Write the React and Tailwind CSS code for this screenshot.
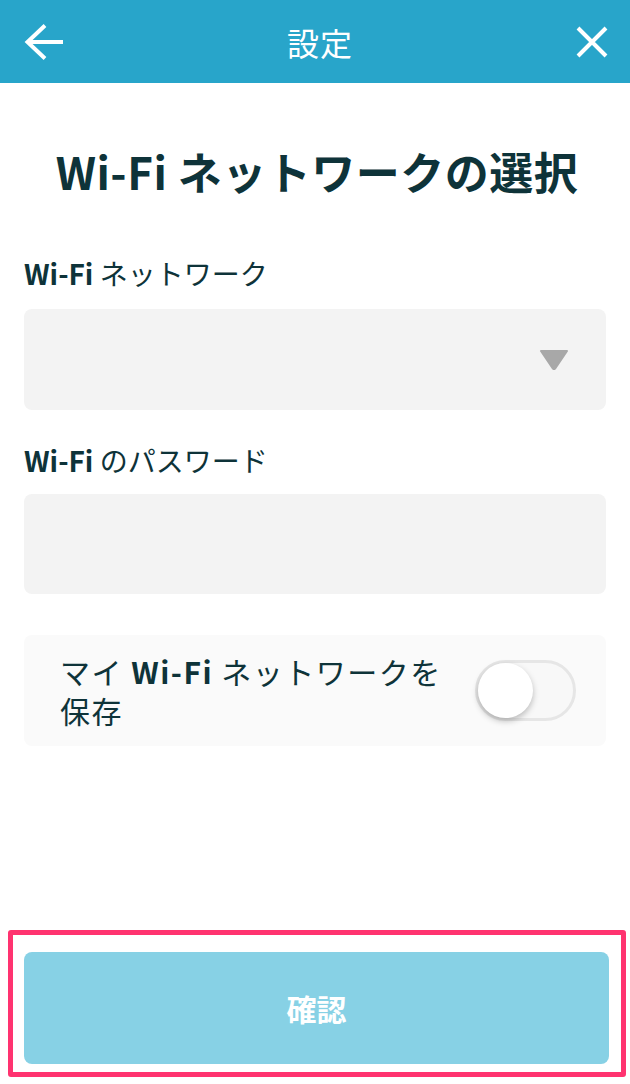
import React from "react";

export default function App() {
  return (
    <div className="min-h-[1084px] w-[630px] bg-white flex flex-col font-['Noto_Sans_CJK_JP',sans-serif] text-[#0e3339]">
      <header className="h-[83px] bg-[#28a5ca] flex items-center justify-between pl-[24px] pr-[22px]">
        <svg width="40" height="36" viewBox="0 0 40 36" fill="none" stroke="#fff" strokeWidth="4" strokeLinecap="butt">
          <path d="M39 18H4" />
          <path d="M21 1.5L3.5 18L21 34.5" />
        </svg>
        <div className="text-[32px] leading-none text-white font-normal tracking-[1px]">設定</div>
        <svg width="32" height="32" viewBox="0 0 32 32" fill="none" stroke="#fff" strokeWidth="4">
          <path d="M2 2L30 30M30 2L2 30" />
        </svg>
      </header>

      <main className="px-6 flex flex-col">
        <h1 className="mt-[62px] pl-[4px] text-center text-[44px] leading-[53px] font-bold tracking-[0.5px]">Wi-Fi ネットワークの選択</h1>

        <div className="mt-[57px] text-[28px] leading-[36px]">
          <span className="font-bold">Wi-Fi</span> ネットワーク
        </div>
        <div className="mt-[18px] h-[101px] rounded-lg bg-[#f3f3f3] flex items-center justify-end pr-[37px]">
          <svg width="30" height="20" viewBox="0 0 30 20">
            <path d="M2 1H28L16.2 18.5Q15 20 13.8 18.5Z" fill="#a8a8a8" strokeLinejoin="round" stroke="#a8a8a8" strokeWidth="2" />
          </svg>
        </div>

        <div className="mt-[32px] text-[28px] leading-[36px]">
          <span className="font-bold">Wi-Fi</span> のパスワード
        </div>
        <div className="mt-[16px] h-[100px] rounded-lg bg-[#f3f3f3]" />

        <div className="mt-[41px] h-[111px] rounded-lg bg-[#fafafa] flex items-center justify-between pl-[36px] pr-[30px]">
          <div className="text-[30px] leading-[39px] whitespace-nowrap tracking-[1.5px]">
            マイ <span className="font-bold">Wi-Fi</span> ネットワークを
            <br />
            保存
          </div>
          <div className="relative w-[101px] h-[61px] rounded-full border-[3px] border-[#e6e6e6] bg-[#f8f8f8]">
            <div className="absolute left-[0px] top-[0px] w-[55px] h-[55px] rounded-full bg-white shadow-[0_3px_6px_rgba(0,0,0,0.25)]" />
          </div>
        </div>
      </main>

      <div className="flex-1" />

      <div className="ml-[8px] mr-[4px] mb-[7px] border-[5px] border-[#ff3370] rounded-[3px] pt-[17px] pb-[8px] pl-[11px] pr-[12px]">
        <button className="w-full h-[112px] rounded-lg bg-[#87d1e5] text-white text-[30px] font-bold leading-none flex items-center justify-center">
          確認
        </button>
      </div>
    </div>
  );
}
